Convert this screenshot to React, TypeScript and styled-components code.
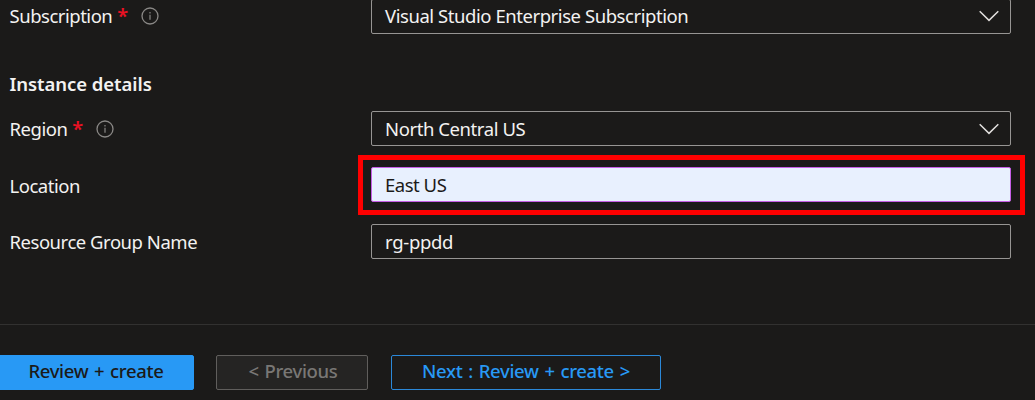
import React from "react";
import styled, { createGlobalStyle } from "styled-components";

const GlobalStyle = createGlobalStyle`
  * { box-sizing: border-box; }
  body { margin: 0; background: #1b1a19; overflow: hidden; }
`;

const Page = styled.main`
  width: 1035px;
  height: 400px;
  overflow: hidden;
  display: flex;
  flex-direction: column;
  background: #1b1a19;
  color: #f3f2f1;
  font: 400 18.5px/34px "Noto Sans", "Open Sans", sans-serif;
  white-space: pre;
`;

const Form = styled.section`
  height: 325px;
  flex: none;
  margin-top: -1px;
`;

const Row = styled.div<{ $gap?: number }>`
  display: grid;
  grid-template-columns: 361.5px 640px;
  margin: 0 0 ${(p) => p.$gap ?? 21}px 9.5px;
  height: 35px;
  position: relative;
`;

const Label = styled.label<{ $height?: number }>`
  display: flex;
  align-items: center;
  height: ${(p) => p.$height ?? 36}px;
`;

const Text = styled.span<{ $track?: number; $word?: number }>`
  letter-spacing: ${(p) => p.$track ?? -0.48}px;
  word-spacing: ${(p) => p.$word ?? 0}px;
`;

const Required = styled.span`
  color: #e81123;
  margin-left: 5px;
  width: 10px;
  font-size: 20px;
  font-weight: 600;
`;

const Info = styled.svg`
  margin-left: 13.5px;
`;

const Field = styled.div<{ $filled?: boolean; $lift?: number }>`
  display: flex;
  align-items: center;
  justify-content: space-between;
  height: 35px;
  padding: 0 11px ${(p) => p.$lift ?? 0}px 13px;
  border: 1px solid ${(p) => (p.$filled ? "#c65ee6" : "#979593")};
  border-radius: 2px;
  background: ${(p) => (p.$filled ? "#e8f0fe" : "#1b1a19")};
  color: ${(p) => (p.$filled ? "#1b1a19" : "#f3f2f1")};
  line-height: 33px;
`;

const Highlight = styled.div`
  position: absolute;
  left: 348.5px;
  top: -12px;
  width: 667px;
  height: 60px;
  border: 5px solid #ff0000;
`;

const Heading = styled.h2`
  margin: 0 0 9px 9.5px;
  padding-top: 33px;
  height: 68px;
  font-size: 18.5px;
  font-weight: 650;
  line-height: 34px;
`;

const Footer = styled.footer`
  flex: 1;
  display: flex;
  align-items: flex-start;
  padding-top: 30px;
  border-top: 1px solid #323130;
`;

const Button = styled.button<{ $kind: "primary" | "disabled" | "outline"; $width: number }>`
  width: ${(p) => p.$width}px;
  height: 35px;
  padding: 0 0 3px;
  font: 500 18.5px/30px "Noto Sans", "Open Sans", sans-serif;
  white-space: pre;
  border-radius: 2px;
  border: 1px solid ${(p) => ({ primary: "#2899f5", disabled: "#605e5c", outline: "#2b88d8" })[p.$kind]};
  background: ${(p) => ({ primary: "#2899f5", disabled: "#252423", outline: "#1b1a19" })[p.$kind]};
  color: ${(p) => ({ primary: "#1b1a19", disabled: "#797775", outline: "#2899f5" })[p.$kind]};
  &:nth-child(1) { margin-left: -2px; }
  &:nth-child(2) { margin: 0 23px 0 22px; padding-left: 2px; }
`;

const ButtonText = ({ children }: { children: React.ReactNode }) => (
  <Text $track={-0.33} $word={1.3}>{children}</Text>
);

const InfoIcon = () => (
  <Info width="18" height="18" viewBox="0 0 18 18" fill="none" stroke="#8a8886">
    <circle cx="9" cy="9" r="8" strokeWidth="1.3" />
    <path d="M9 7.7v5M9 5v1.4" strokeWidth="1.2" />
  </Info>
);

const Chevron = () => (
  <svg width="20" height="12" viewBox="0 0 20 12" fill="none" stroke="#e1dfdd" strokeWidth="1.5">
    <path d="M.7 1.2 10 10.4l9.3-9.2" />
  </svg>
);

export default function App() {
  return (
    <Page>
      <GlobalStyle />
      <Form>
        <Row $gap={0}>
          <Label $height={34}><Text>Subscription</Text><Required>*</Required><InfoIcon /></Label>
          <Field $lift={2}><Text $track={-0.44}>Visual Studio Enterprise Subscription</Text><Chevron /></Field>
        </Row>
        <Heading><Text $track={-0.06}>Instance details</Text></Heading>
        <Row>
          <Label><Text>Region</Text><Required>*</Required><InfoIcon /></Label>
          <Field><Text $track={-0.42}>North Central US</Text><Chevron /></Field>
        </Row>
        <Row $gap={22}>
          <Label $height={37}><Text>Location</Text></Label>
          <Field $filled><Text>East US</Text></Field>
          <Highlight />
        </Row>
        <Row>
          <Label><Text $track={-0.47}>Resource Group Name</Text></Label>
          <Field><Text $track={-0.3}>rg-ppdd</Text></Field>
        </Row>
      </Form>
      <Footer>
        <Button $kind="primary" $width={196}><ButtonText>Review + create</ButtonText></Button>
        <Button $kind="disabled" $width={152}><ButtonText>&lt; Previous</ButtonText></Button>
        <Button $kind="outline" $width={270}><ButtonText>Next : Review + create &gt;</ButtonText></Button>
      </Footer>
    </Page>
  );
}
